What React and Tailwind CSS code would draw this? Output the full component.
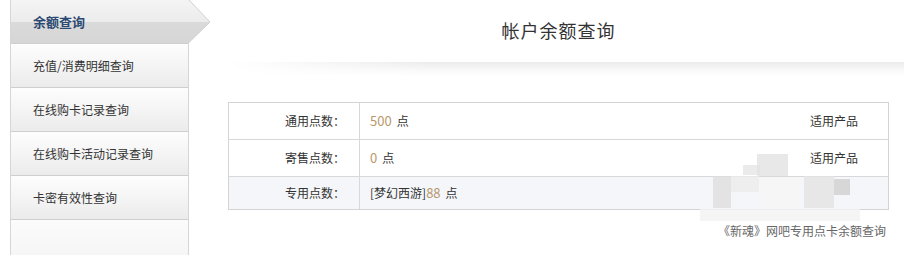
const menu = ["充值/消费明细查询", "在线购卡记录查询", "在线购卡活动记录查询", "卡密有效性查询"];

const rows = [
  { label: "通用点数：", prefix: "", value: "500", link: "适用产品", bg: "bg-white" },
  { label: "寄售点数：", prefix: "", value: "0", link: "适用产品", bg: "bg-white" },
  { label: "专用点数：", prefix: "[梦幻西游]", value: "88", link: "", bg: "bg-[#f4f6f9]" },
];

// pixelated watermark blocks sitting over the table
const blocks = [
  { l: 743, t: 165, w: 17, h: 10, c: "#e6e6e6" },
  { l: 757, t: 154, w: 31, h: 22, c: "#e2e2e2" },
  { l: 713, t: 176, w: 18, h: 32, c: "#dedede" },
  { l: 731, t: 176, w: 28, h: 16, c: "#ececec" },
  { l: 760, t: 178, w: 40, h: 30, c: "#f6f6f6" },
  { l: 804, t: 176, w: 30, h: 32, c: "#e3e3e3" },
  { l: 834, t: 179, w: 16, h: 16, c: "#cfcfcf" },
  { l: 700, t: 209, w: 160, h: 12, c: "#f3f3f3" },
];

export default function App() {
  return (
    <div
      className="relative flex w-[904px] h-[255px] overflow-hidden bg-white text-[#333]"
      style={{ fontFamily: '"Noto Sans CJK SC", "Noto Sans", sans-serif' }}
    >
      <div className="ml-[10px] w-[179px] h-full flex flex-col border-x border-[#d6d6d6] bg-[#f7f7f7]">
        <div className="relative h-[44px] shrink-0 flex items-center pl-[22px] bg-[linear-gradient(#f4f4f4,#ececec_50%,#dadada_52%,#d6d6d6)] border-b border-[#cfcfcf]">
          <span className="text-[13px] font-bold text-[#2b4a72]">余额查询</span>
          <svg className="absolute top-0 right-[-24px]" width="24" height="44" viewBox="0 0 24 44">
            <defs>
              <linearGradient id="ag" x1="0" y1="0" x2="0" y2="1">
                <stop offset="0" stopColor="#f4f4f4" />
                <stop offset="0.5" stopColor="#ececec" />
                <stop offset="0.52" stopColor="#dadada" />
                <stop offset="1" stopColor="#d6d6d6" />
              </linearGradient>
            </defs>
            <polygon points="0,0 1,0 22,22 1,43 0,43" fill="url(#ag)" />
            <polyline points="1,0 22,22 0,43" fill="none" stroke="#d0d0d0" strokeWidth="1" />
          </svg>
        </div>
        {menu.map((m) => (
          <div
            key={m}
            className="h-[44px] shrink-0 flex items-center pl-[22px] text-[12px] text-[#333] bg-[linear-gradient(#fdfdfd,#f3f3f3_60%,#ebebeb)] border-b border-[#cfcfcf]"
          >
            {m}
          </div>
        ))}
        <div className="flex-1 bg-[linear-gradient(#fbfbfb,#f6f6f6)]" />
      </div>

      <div className="flex-1 flex flex-col pl-[39px] pr-[15px]">
        <div className="h-[62px] flex items-center justify-center text-[18px] tracking-[1px] text-[#333] pb-[1px]">帐户余额查询</div>
        <div className="h-[14px] -mr-[15px] bg-[linear-gradient(#ebebeb,#f7f7f7_50%,#ffffff)] [mask-image:linear-gradient(90deg,transparent,black_30%,black)]" />
        <div className="mt-[26px] border border-[#d4d4d4]">
          {rows.map((r, i) => (
            <div
              key={r.label}
              className={`flex text-[12px] ${r.bg} ${i < 2 ? "h-[37px] border-b border-[#d8d8d8]" : "h-[32px]"}`}
            >
              <div className="w-[131px] shrink-0 flex items-center justify-end pr-[14px] border-r border-[#d8d8d8]">{r.label}</div>
              <div className="flex-1 flex items-center pl-[10px]">
                {r.prefix}
                <span className="text-[#b8986d] text-[13px]">{r.value}</span>
                <span className="ml-[5px]">点</span>
              </div>
              <div className="flex items-center pr-[30px]">{r.link}</div>
            </div>
          ))}
        </div>
        <div className="mt-[12px] text-right pr-[3px] text-[12px] text-[#666]">《新魂》网吧专用点卡余额查询</div>
      </div>

      {blocks.map((b, i) => (
        <div
          key={i}
          className="absolute opacity-80"
          style={{ left: b.l, top: b.t, width: b.w, height: b.h, background: b.c }}
        />
      ))}
    </div>
  );
}
